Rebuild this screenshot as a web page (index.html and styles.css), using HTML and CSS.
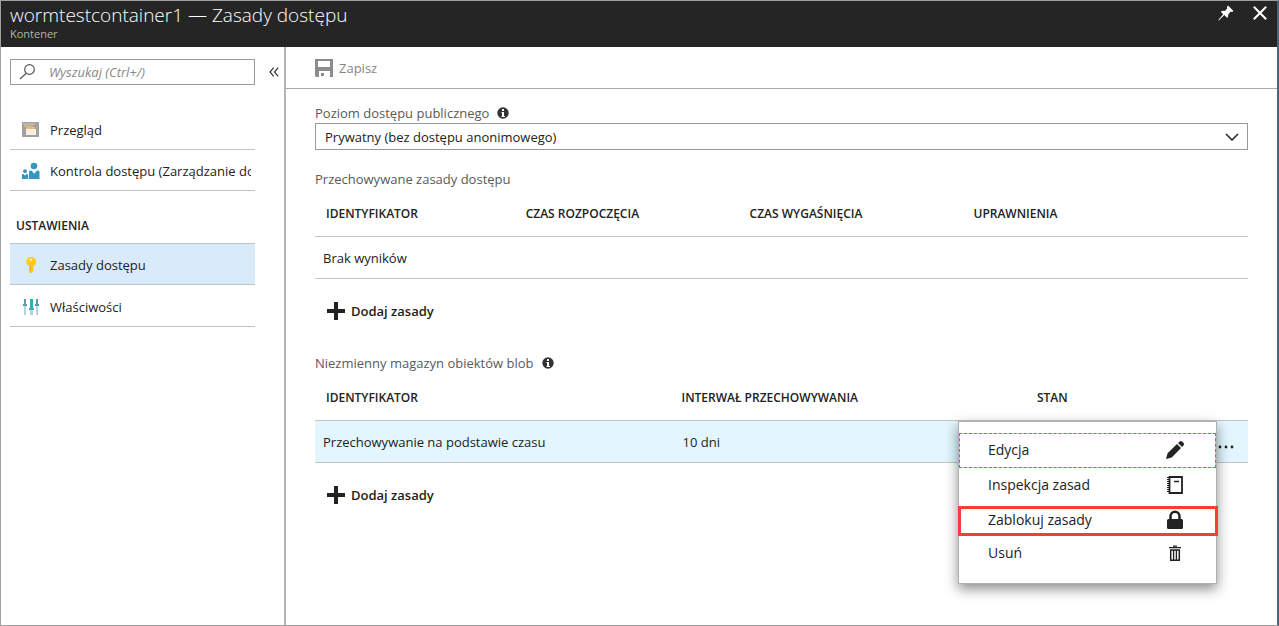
FILE: index.html
```html
<!DOCTYPE html>
<html lang="pl">
<head>
<meta charset="utf-8">
<title>wormtestcontainer1 — Zasady dostępu</title>
<link rel="stylesheet" href="styles.css">
</head>
<body>
<div class="blade">
  <header class="blade-header">
    <div class="titles">
      <h1 class="title">wormtestcontainer1 — Zasady dostępu</h1>
      <p class="subtitle">Kontener</p>
    </div>
    <div class="window-actions">
      <button class="icon-button" type="button" aria-label="Przypnij">
        <svg width="16" height="16" viewBox="0 0 16 16" fill="#fff"><path d="M10 0.500L15.500 6L14 7L12.800 6.600L10.300 9.200Q10.600 11.400 9.300 13L6.300 10L0.800 15.500L0.300 15L5.200 9.200L2.800 6.700Q4.600 5.500 6.800 6L9.400 3.300L8.900 2Z"/></svg>
      </button>
      <button class="icon-button" type="button" aria-label="Zamknij">
        <svg width="16" height="16" viewBox="0 0 16 16" fill="none" stroke="#fff" stroke-width="2"><path d="M1.800 1.800L14.200 14.200M14.200 1.800L1.800 14.200"/></svg>
      </button>
    </div>
  </header>
  <div class="blade-body">
    <aside class="sidebar">
      <div class="search-row">
        <label class="search">
          <svg width="18" height="18" viewBox="0 0 18 18" fill="none" stroke="#555" stroke-width="1.200"><circle cx="10.500" cy="6.500" r="4.800"/><path d="M7.200 10.200L1 16"/></svg>
          <input class="search-input" type="text" placeholder="Wyszukaj (Ctrl+/)" aria-label="Wyszukaj">
        </label>
        <button class="collapse" type="button" aria-label="Zwiń">
          <svg width="10" height="10" viewBox="0 0 10 10" fill="none" stroke="#333" stroke-width="1.200"><path d="M4.700 0.700L1 5L4.700 9.300M9.200 0.700L5.500 5L9.200 9.300"/></svg>
        </button>
      </div>
      <nav class="nav">
        <a class="nav-item" href="#">
          <svg width="18" height="18" viewBox="0 0 18 18"><path fill="#a3a1a0" d="M0 1h17v15H0z"/><path fill="#c9b394" d="M2 4h9v2H2z"/><path fill="#bcb6b0" d="M1 2h12v2H1z"/><path fill="#f2b968" d="M4 6h9v2H4z"/><path fill="#f4efe8" d="M4 8h10v6H4z"/></svg>
          <span class="nav-text">Przegląd</span>
        </a>
        <a class="nav-item" href="#">
          <svg width="18" height="18" viewBox="0 0 18 18" fill="#3596c4"><circle cx="12" cy="4" r="3.300"/><circle cx="3" cy="9.200" r="1.900"/><path d="M7 17V10Q7 8.500 8.500 8.500H9.500L12.200 11.800L15 8.500H16Q17.500 8.500 17.500 10V17ZM0 17V13Q0 12 1 12H1.800L3 13.700L4.300 12H5Q6 12 6 13V17Z"/></svg>
          <span class="nav-text">Kontrola dostępu (Zarządzanie dostępem)</span>
        </a>
        <h2 class="nav-heading">USTAWIENIA</h2>
        <a class="nav-item selected" href="#" aria-current="page">
          <svg width="18" height="18" viewBox="0 0 18 18"><path fill="#fbcb1b" d="M9 1a5 4.800 0 0 1 2.500 9V15L9 17.500L7 15.500V10A5 4.800 0 0 1 9 1Z"/><circle cx="9" cy="3.800" r="1.200" fill="#fff3bd"/><path d="M8.700 10V15" stroke="#e8ad0c" fill="none"/></svg>
          <span class="nav-text">Zasady dostępu</span>
        </a>
        <a class="nav-item last" href="#">
          <svg width="18" height="18" viewBox="0 0 18 18"><path fill="#b9d3d8" d="M2 1h2v16H2zM8 1h3v16H8zM14 1h2v16h-2z"/><path fill="#5c9ca8" d="M2 1h2v5H2zM1 6h4v2H1zM14 1h2v5h-2zM13 6h4v2h-4z"/><path fill="#35aebb" d="M8 1h3v9H8zM7 10h5v2H7z"/></svg>
          <span class="nav-text">Właściwości</span>
        </a>
      </nav>
    </aside>
    <main class="main">
      <div class="toolbar">
        <button class="save" type="button" disabled>
          <svg width="18" height="18" viewBox="0 0 18 18"><path fill="#8c8c8c" fill-rule="evenodd" d="M0 0H18V18H15V12H4V18H1L0 17ZM3 2V8H15V2ZM6 14H9V17H6Z"/></svg>
          <span>Zapisz</span>
        </button>
      </div>
      <div class="content">
        <div class="field-label">
          <label for="level">Poziom dostępu publicznego</label>
          <svg width="12" height="12" viewBox="0 0 12 12"><circle cx="6" cy="6" r="5.700" fill="#333"/><path fill="#fff" d="M5 2h2v2H5zM4.500 5H7v4h1v1H4.500V9H5V6h-.5z"/></svg>
        </div>
        <div class="select-box">
          <select class="select" id="level"><option>Prywatny (bez dostępu anonimowego)</option></select>
          <svg class="chevron" width="14" height="8" viewBox="0 0 14 8" fill="none" stroke="#222" stroke-width="1.500"><path d="M1 1L7 7L13 1"/></svg>
        </div>

        <section class="section stored">
          <h2 class="field-label">Przechowywane zasady dostępu</h2>
          <table class="table">
            <colgroup><col class="c-id"><col class="c-date"><col class="c-date"><col></colgroup>
            <thead><tr><th>IDENTYFIKATOR</th><th>CZAS ROZPOCZĘCIA</th><th>CZAS WYGAŚNIĘCIA</th><th>UPRAWNIENIA</th></tr></thead>
            <tbody><tr><td colspan="4">Brak wyników</td></tr></tbody>
          </table>
          <button class="add" type="button">
            <svg width="18" height="18" viewBox="0 0 18 18"><path fill="#222" d="M7 0h4v7h7v4h-7v7H7v-7H0V7h7z"/></svg>
            <span>Dodaj zasady</span>
          </button>
        </section>

        <section class="section immutable">
          <h2 class="field-label">Niezmienny magazyn obiektów blob
            <svg width="12" height="12" viewBox="0 0 12 12"><circle cx="6" cy="6" r="5.700" fill="#333"/><path fill="#fff" d="M5 2h2v2H5zM4.500 5H7v4h1v1H4.500V9H5V6h-.5z"/></svg>
          </h2>
          <div class="table-wrap">
            <table class="table">
              <colgroup><col class="c-wide"><col class="c-wide"><col></colgroup>
              <thead><tr><th>IDENTYFIKATOR</th><th>INTERWAŁ PRZECHOWYWANIA</th><th>STAN</th></tr></thead>
              <tbody><tr class="active"><td>Przechowywanie na podstawie czasu</td><td>10 dni</td>
                <td class="more-cell"><button class="more" type="button" aria-label="Więcej"><svg width="18" height="4" viewBox="0 0 18 4" fill="#222"><circle cx="2" cy="2" r="1.400"/><circle cx="8" cy="2" r="1.400"/><circle cx="14" cy="2" r="1.400"/></svg></button></td></tr></tbody>
            </table>
            <div class="menu" role="menu">
              <button class="menu-item focused" type="button" role="menuitem"><span>Edycja</span>
                <svg width="20" height="20" viewBox="0 0 20 20" fill="#222"><path d="M1 19L2.600 13.300L12 4L16 8L6.700 17.400ZM13 3L15 1.200Q16 0.500 17 1.400L18.600 3Q19.500 4 18.800 5L17 7Z"/></svg></button>
              <button class="menu-item" type="button" role="menuitem"><span>Inspekcja zasad</span>
                <svg width="20" height="20" viewBox="0 0 20 20" fill="none" stroke="#222"><path stroke-width="1.800" d="M4.500 2H17V18H4.500Z"/><path stroke-width="1.500" d="M9 6.500H14"/><path stroke-width="3" stroke-dasharray="1 1" d="M3.500 2V18"/></svg></button>
              <button class="menu-item marked" type="button" role="menuitem"><span>Zablokuj zasady</span>
                <svg width="20" height="20" viewBox="0 0 20 20"><path fill="none" stroke="#222" stroke-width="2.500" d="M5.500 10V6.500A4.500 4.700 0 0 1 14.500 6.500V10"/><rect x="2" y="9" width="16" height="10" rx="1.500" fill="#222"/></svg></button>
              <button class="menu-item" type="button" role="menuitem"><span>Usuń</span>
                <svg width="20" height="20" viewBox="0 0 20 20" fill="none" stroke="#222"><path stroke-width="1.300" d="M4 4.700H16M8 3.200H12"/><path stroke-width="1.500" d="M5.700 6.500V17.200H14.300V6.500M5 6.900H15"/><path stroke-width="1.300" d="M8.600 7V17M11.400 7V17"/></svg></button>
            </div>
          </div>
          <button class="add" type="button">
            <svg width="18" height="18" viewBox="0 0 18 18"><path fill="#222" d="M7 0h4v7h7v4h-7v7H7v-7H0V7h7z"/></svg>
            <span>Dodaj zasady</span>
          </button>
        </section>
      </div>
    </main>
  </div>
</div>
</body>
</html>
```
FILE: styles.css
```css
* { box-sizing: border-box; }

body {
  margin: 0;
  font-family: "Open Sans", "Noto Sans", sans-serif;
  font-size: 13px;
  line-height: 20px;
  color: #222;
  background: #fff;
}

button, input, select { font: inherit; color: inherit; }

button {
  padding: 0;
  border: 0;
  background: none;
}

h1, h2, p { margin: 0; font-weight: 400; }

svg { display: block; flex: none; }

.blade {
  display: flex;
  flex-direction: column;
  min-height: 100vh;
  border: 1px solid #a0a0a0;
  border-right: 2px solid #4a6577;
}

.blade-header {
  display: flex;
  justify-content: space-between;
  height: 46px;
  padding: 2px 9px 0;
  background: #252525;
}

.title {
  font-size: 19px;
  font-weight: 300;
  line-height: 24px;
  color: #fff;
}

.subtitle {
  font-size: 11px;
  line-height: 14px;
  color: #b4b4b4;
}

.window-actions {
  display: flex;
  gap: 18px;
  padding-top: 2px;
}

.icon-button { height: 16px; }

.blade-body { display: flex; flex: 1; }

.sidebar {
  flex: none;
  width: 285px;
  padding: 12px 5px 0 9px;
  border-right: 2px solid #b4b4b4;
}

.search-row {
  display: flex;
  align-items: center;
  gap: 14px;
}

.search {
  display: flex;
  align-items: center;
  gap: 12px;
  width: 245px;
  height: 26px;
  padding: 0 8px;
  border: 1px solid #999;
}

.search-input {
  flex: 1;
  min-width: 0;
  padding: 0;
  border: 0;
  outline: 0;
  font-style: italic;
}

.search-input::placeholder { color: #888; opacity: 1; }

.nav { width: 245px; margin-top: 24px; }

.nav-item {
  display: flex;
  align-items: center;
  gap: 10px;
  height: 41px;
  padding: 2px 4px 0 12px;
  border-bottom: 1px solid #bfc3c1;
  color: #222;
  text-decoration: none;
}

.nav-text { overflow: hidden; white-space: nowrap; }

.nav-heading {
  height: 52px;
  padding: 25px 6px 0;
  font-size: 12px;
  font-weight: 600;
}

.selected {
  height: 42px;
  border-top: 1px solid #bfc3c1;
  background: #d9ebfb;
}

.last { height: 42px; }

.main { flex: 1; min-width: 0; }

.toolbar {
  display: flex;
  align-items: center;
  height: 42px;
  padding: 0 29px;
  border-bottom: 1px solid #aaa;
}

.save {
  display: flex;
  align-items: center;
  gap: 6px;
  color: #888;
}

.content { padding: 14px 29px 24px; }

.field-label {
  display: flex;
  align-items: center;
  gap: 8px;
  font-size: 13px;
  color: #5a5a5a;
}

.select-box {
  display: grid;
  align-items: center;
}

.select, .chevron { grid-area: 1 / 1; }

.select {
  width: 100%;
  height: 27px;
  padding: 0 9px;
  border: 1px solid #999;
  border-radius: 0;
  background: #fff;
  appearance: none;
}

.chevron {
  justify-self: end;
  margin-right: 9px;
  pointer-events: none;
}

.stored { margin-top: 19px; }
.immutable { margin-top: 32px; }

.table {
  width: 100%;
  border-collapse: separate;
  border-spacing: 0;
  table-layout: fixed;
}

.c-id { width: 21.4%; }
.c-date { width: 24%; }
.c-wide { width: 38.1%; }

.table th, .table td {
  border-bottom: 1px solid #c3c6c5;
  text-align: left;
}

.table th {
  height: 48px;
  padding: 2px 11px 0;
  font-size: 12px;
  font-weight: 600;
}

.table td { height: 42px; padding: 0 12px; }
.table td:first-child { padding-left: 8px; }
.active { background: #e3f6fd; }

.table .more-cell { padding-top: 10px; }

.more { display: block; margin-left: auto; }

.add {
  display: flex;
  align-items: center;
  gap: 6px;
  margin: 22px 0 0 12px;
  font-weight: 600;
}

.table-wrap { position: relative; }

.menu {
  position: absolute;
  top: 48px;
  right: 31px;
  width: 259px;
  padding: 11px 0 12px;
  border: 1px solid #b0b0b0;
  background: #fff;
  box-shadow: 0 5px 12px rgba(0, 0, 0, 0.45);
}

.menu-item {
  display: flex;
  align-items: center;
  justify-content: space-between;
  width: 100%;
  height: 35px;
  padding: 0 30px 1px 28px;
  border: 1px solid transparent;
  font-size: 14px;
}

.focused {
  border: 1px dashed #12a5c4;
  background:
    linear-gradient(#fff, #fff) padding-box,
    linear-gradient(#8aeefb, #8aeefb) border-box;
}

.marked {
  width: 260px;
  height: 30px;
  margin: 3px -2px 0 -1px;
  padding: 0 30px 2px 27px;
  border: 3px solid #f83c3c;
}
```
